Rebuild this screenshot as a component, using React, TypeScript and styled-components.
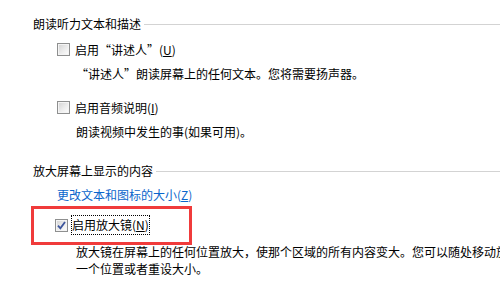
import React from "react";
import styled, { createGlobalStyle } from "styled-components";

const Global = createGlobalStyle`
  html, body { margin: 0; padding: 0; background: #ffffff; }
  body {
    font-family: "Microsoft YaHei", "Noto Sans CJK SC", "Noto Sans", sans-serif;
    font-size: 12px;
    color: #000;
  }
`;

const Page = styled.div`
  width: 500px;
  height: 290px;
  overflow: hidden;
  padding: 15px 0 0 33px;
  box-sizing: border-box;
  display: flex;
  flex-direction: column;
`;

const Heading = styled.div<{ $top?: number }>`
  display: flex;
  align-items: center;
  gap: 3px;
  height: 17px;
  line-height: 17px;
  margin-top: ${(p) => p.$top ?? 0}px;
  white-space: nowrap;
  &::after {
    content: "";
    flex: 1;
    height: 1px;
    background: #d3d3d3;
    margin-top: 1px;
  }
`;

const OptionRow = styled.div<{ $top?: number }>`
  display: flex;
  align-items: center;
  gap: 5px;
  height: 17px;
  line-height: 17px;
  margin-top: ${(p) => p.$top ?? 0}px;
  padding-left: 24px;
  white-space: nowrap;
`;

const Box = styled.span`
  width: 13px;
  height: 13px;
  box-sizing: border-box;
  border: 1px solid #8e8f8f;
  display: inline-flex;
  align-items: center;
  justify-content: center;
  flex: none;
  position: relative;
  background: #f4f4f4;
  &::before {
    content: "";
    position: absolute;
    inset: 1px;
    background: linear-gradient(135deg, #d6d6d6 0%, #ececec 55%, #fbfbfb 100%);
  }
  svg { position: relative; }
`;

const Label = styled.span<{ $focus?: boolean }>`
  display: inline-block;
  padding: ${(p) => (p.$focus ? "1px 0" : "0")};
  border: ${(p) => (p.$focus ? "1px dotted #000" : "none")};
  line-height: 16px;
`;

const Key = styled.span`
  text-decoration: underline;
  text-underline-offset: 1px;
`;

const Desc = styled.div<{ $top?: number }>`
  margin-top: ${(p) => p.$top ?? 0}px;
  padding-left: 43px;
  line-height: 17px;
  white-space: nowrap;
`;

const Link = styled.a`
  display: block;
  margin-top: 7px;
  padding-left: 24px;
  height: 17px;
  line-height: 17px;
  color: #0a66cc;
  text-decoration: none;
  white-space: nowrap;
`;

const Highlight = styled.div`
  margin-top: 3px;
  margin-left: -2px;
  width: 161px;
  height: 39px;
  box-sizing: border-box;
  border: 3px solid #f03b3b;
  display: flex;
  align-items: center;
  padding-left: 21px;
  padding-bottom: 1px;
`;

const CheckRow = styled.div`
  display: flex;
  align-items: center;
  gap: 3px;
  white-space: nowrap;
`;

function Checkbox({ checked }: { checked?: boolean }) {
  return (
    <Box>
      {checked && (
        <svg width="9" height="9" viewBox="0 0 9 9">
          <path
            d="M1 4.6 L3.4 7.4 L8 1"
            fill="none"
            stroke="#3d559c"
            strokeWidth="1.8"
          />
        </svg>
      )}
    </Box>
  );
}

export default function App() {
  return (
    <>
      <Global />
      <Page>
        <Heading>朗读听力文本和描述</Heading>
        <OptionRow $top={9}>
          <Checkbox />
          <Label>
            启用“讲述人”(<Key>U</Key>)
          </Label>
        </OptionRow>
        <Desc $top={7}>“讲述人”朗读屏幕上的任何文本。您将需要扬声器。</Desc>
        <OptionRow $top={17}>
          <Checkbox />
          <Label>
            启用音频说明(<Key>I</Key>)
          </Label>
        </OptionRow>
        <Desc $top={7}>朗读视频中发生的事(如果可用)。</Desc>
        <Heading $top={22}>放大屏幕上显示的内容</Heading>
        <Link>
          更改文本和图标的大小(<Key>Z</Key>)
        </Link>
        <Highlight>
          <CheckRow>
            <Checkbox checked />
            <Label $focus>
              启用放大镜(<Key>N</Key>)
            </Label>
          </CheckRow>
        </Highlight>
        <Desc $top={-2}>
          放大镜在屏幕上的任何位置放大，使那个区域的所有内容变大。您可以随处移动放大镜
        </Desc>
        <Desc>一个位置或者重设大小。</Desc>
      </Page>
    </>
  );
}
